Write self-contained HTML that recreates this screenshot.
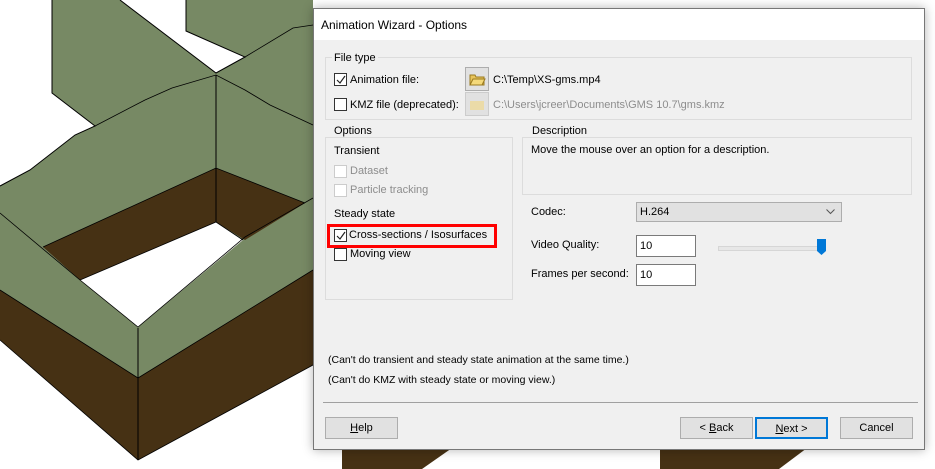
<!DOCTYPE html>
<html><head><meta charset="utf-8"><style>
body{margin:0;width:935px;height:469px;overflow:hidden;background:#fff;position:relative;font-family:"Liberation Sans",sans-serif;font-size:11px;color:#000}
.a{position:absolute;white-space:nowrap}
.dlg span.a{margin-top:1px}
.dlg{position:absolute;left:313px;top:8px;width:610px;height:440px;border:1px solid #777;background:#f0f0f0;box-shadow:0 0 10px rgba(0,0,0,.3)}
.title{position:absolute;left:0;top:0;width:610px;height:31px;background:#fff}
.grp{position:absolute;border:1px solid #dcdcdc}
.cb{position:absolute;width:11px;height:11px;border:1px solid #333;background:#fff}
.cb.d{border-color:#ccc}
.cb svg{position:absolute;left:1px;top:1px}
.btn{position:absolute;height:20px;border:1px solid #adadad;background:#e1e1e1;text-align:center;line-height:21px}
.inp{position:absolute;background:#fff;border:1px solid #7a7a7a;height:22px;line-height:20px;padding-left:3px;box-sizing:border-box}
.g{color:#8d8d8d}
</style></head><body>
<svg class="a" style="left:0;top:0" width="935" height="469">
<polygon points="52,0,313,0,313,460,0,460,0,186,30,170,75,135,95,126,52,93" fill="#778964"/>
<polygon points="120,0,186,0,186,31,245,57,216,73" fill="#fff"/>
<polyline points="52,0,52,93,95,126,75,135,30,170,0,186" fill="none" stroke="#000" stroke-width="1"/>
<polyline points="120,0,216,73,245,57,186,31,186,0" fill="none" stroke="#000"/>
<polyline points="245,57,293,28,313,25" fill="none" stroke="#000" stroke-width=".8"/>
<polyline points="95,126,145,100,172,88,216,75,245,90,270,105,313,125" fill="none" stroke="#000" stroke-width=".8"/>
<polygon points="0,290,138,378,313,270,313,365,138,460,0,340" fill="#463114"/>
<polygon points="0,340,138,460,0,460" fill="#fff"/>
<polygon points="138,460,313,365,313,469,138,469" fill="#fff"/>
<polygon points="43,247,216,168,305,203,245,240,216,222,80,280" fill="#463114"/>
<polygon points="80,280,216,222,243,240,138,327" fill="#fff"/>
<polyline points="0,213,80,280,138,327,245,237,313,198" fill="none" stroke="#000" stroke-width=".8"/>
<polyline points="43,247,216,168,305,203" fill="none" stroke="#000" stroke-width=".8"/>
<polyline points="80,280,216,222,243,240" fill="none" stroke="#000" stroke-width=".8"/>
<polyline points="0,290,138,378,313,270" fill="none" stroke="#000" stroke-width=".8"/>
<polyline points="0,340,138,460,313,365" fill="none" stroke="#000" stroke-width=".8"/>
<line x1="216" y1="75" x2="216" y2="222" stroke="#000"/>
<line x1="138" y1="328" x2="138" y2="460" stroke="#000"/>
<polygon points="342,448,452,448,422,469,342,469" fill="#463114"/>
<polygon points="660,448,807,448,779,469,660,469" fill="#463114"/>
</svg>
<div class="dlg">
<div class="title"><span class="a" style="left:7px;top:8px;font-size:12px">Animation Wizard - Options</span></div>
<div class="grp" style="left:11px;top:48px;width:585px;height:61px"></div>
<span class="a" style="left:18px;top:42px;background:#f0f0f0;padding:0 2px">File type</span>
<div class="cb" style="left:20px;top:64px"><svg width="10" height="10"><path d="M1 5l3 3 5-7" fill="none" stroke="#222" stroke-width="1.2"/></svg></div>
<span class="a" style="left:36px;top:64px">Animation file:</span>
<div class="btn" style="left:151px;top:58px;width:22px;height:22px"><svg width="18" height="16" style="margin-top:3px"><path d="M2 4h5l1 2h8v8H2z" fill="#e8c45a" stroke="#9a7a20"/><path d="M2 14l3-6h12l-3 6z" fill="#f4d97a" stroke="#9a7a20"/></svg></div>
<span class="a" style="left:179px;top:64px">C:\Temp\XS-gms.mp4</span>
<div class="cb" style="left:20px;top:89px"></div>
<span class="a" style="left:36px;top:89px">KMZ file (deprecated):</span>
<div class="btn" style="left:151px;top:83px;width:22px;height:22px;border-color:#ccc"><svg width="18" height="16" style="margin-top:3px"><path d="M2 5h14v9H2z" fill="#f0d890" opacity=".7"/></svg></div>
<span class="a g" style="left:179px;top:89px">C:\Users\jcreer\Documents\GMS 10.7\gms.kmz</span>
<div class="grp" style="left:11px;top:128px;width:186px;height:161px"></div>
<span class="a" style="left:18px;top:115px;background:#f0f0f0;padding:0 2px">Options</span>
<span class="a" style="left:20px;top:135px">Transient</span>
<div class="cb d" style="left:20px;top:156px"></div><span class="a g" style="left:36px;top:155px">Dataset</span>
<div class="cb d" style="left:20px;top:175px"></div><span class="a g" style="left:36px;top:174px">Particle tracking</span>
<span class="a" style="left:20px;top:198px">Steady state</span>
<div class="cb" style="left:20px;top:220px"><svg width="10" height="10"><path d="M1 5l3 3 5-7" fill="none" stroke="#222" stroke-width="1.2"/></svg></div>
<span class="a" style="left:35px;top:219px">Cross-sections / Isosurfaces</span>
<div class="a" style="left:13px;top:215px;width:164px;height:18px;border:3px solid #f00"></div>
<div class="cb" style="left:20px;top:239px"></div><span class="a" style="left:36px;top:238px">Moving view</span>
<div class="grp" style="left:208px;top:128px;width:388px;height:56px"></div>
<span class="a" style="left:216px;top:115px;background:#f0f0f0;padding:0 2px">Description</span>
<span class="a" style="left:217px;top:134px">Move the mouse over an option for a description.</span>
<span class="a" style="left:217px;top:196px">Codec:</span>
<div class="inp" style="left:322px;top:193px;width:206px;height:20px;line-height:18px;background:#e1e1e1;border-color:#adadad">H.264<svg class="a" style="right:6px;top:6px" width="9" height="6"><path d="M0.5 0.5l4 4 4-4" fill="none" stroke="#555"/></svg></div>
<span class="a" style="left:217px;top:229px">Video Quality:</span>
<div class="inp" style="left:322px;top:226px;width:60px">10</div>
<div class="a" style="left:404px;top:237px;width:104px;height:3px;background:#e7e7e7;border:1px solid #d6d6d6"></div>
<svg class="a" style="left:503px;top:230px" width="10" height="17"><path d="M0 0h9v12l-4.5 4L0 12z" fill="#0078d7"/></svg>
<span class="a" style="left:217px;top:258px">Frames per second:</span>
<div class="inp" style="left:322px;top:255px;width:60px">10</div>
<span class="a" style="left:14px;top:344px;font-size:10.5px">(Can't do transient and steady state animation at the same time.)</span>
<span class="a" style="left:14px;top:364px;font-size:10.5px">(Can't do KMZ with steady state or moving view.)</span>
<div class="a" style="left:9px;top:393px;width:595px;height:1px;background:#a0a0a0"></div>
<div class="btn" style="left:11px;top:408px;width:71px"><u>H</u>elp</div>
<div class="btn" style="left:366px;top:408px;width:71px">&lt; <u>B</u>ack</div>
<div class="btn" style="left:441px;top:408px;width:69px;height:18px;border:2px solid #0078d7"><u>N</u>ext &gt;</div>
<div class="btn" style="left:526px;top:408px;width:71px">Cancel</div>
</div>
</body></html>
